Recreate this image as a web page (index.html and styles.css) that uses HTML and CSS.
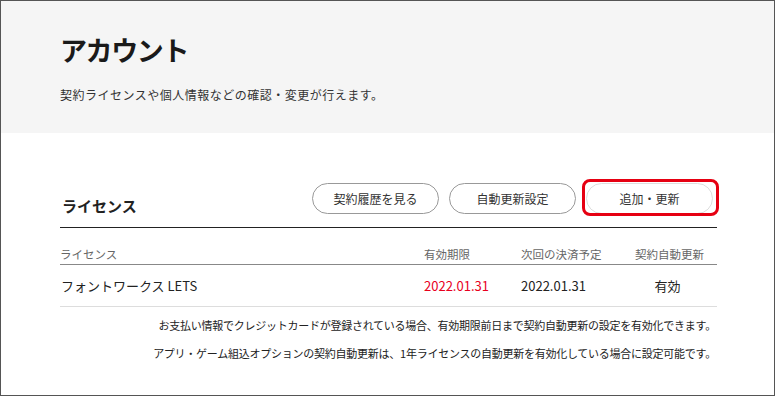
FILE: index.html
```html
<!DOCTYPE html>
<html lang="ja">
<head>
  <meta charset="UTF-8">
  <meta name="viewport" content="width=device-width, initial-scale=1.0">
  <title>アカウント</title>
  <link rel="stylesheet" href="styles.css">
</head>
<body>

  <div class="page">
    <header class="hero">
      <h1>アカウント</h1>
      <p>契約ライセンスや個人情報などの確認・変更が行えます。</p>
    </header>

    <main class="content">
      <div class="section-head">
        <h2>ライセンス</h2>
        <div class="actions">
          <button class="btn">契約履歴を見る</button>
          <button class="btn">自動更新設定</button>
          <button class="btn btn-hl">追加・更新</button>
        </div>
      </div>

      <table class="license-table">
        <thead>
          <tr>
            <th class="col-name">ライセンス</th>
            <th class="col-limit">有効期限</th>
            <th class="col-next">次回の決済予定</th>
            <th class="col-auto">契約自動更新</th>
          </tr>
        </thead>
        <tbody>
          <tr>
            <td>フォントワークス LETS</td>
            <td class="expire">2022.01.31</td>
            <td>2022.01.31</td>
            <td class="center">有効</td>
          </tr>
        </tbody>
      </table>

      <p class="note">お支払い情報でクレジットカードが登録されている場合、有効期限前日まで契約自動更新の設定を有効化できます。</p>
      <p class="note">アプリ・ゲーム組込オプションの契約自動更新は、1年ライセンスの自動更新を有効化している場合に設定可能です。</p>
    </main>
  </div>

</body>
</html>
```

FILE: styles.css
```css
body {
  margin: 0;
  font-family: "Noto Sans CJK JP", "Noto Sans", sans-serif;
  color: #222;
  background: #fff;
}
.page {
  width: 775px;
  height: 396px;
  box-sizing: border-box;
  border: 1px solid #555;
  overflow: hidden;
}
.hero {
  background-color: #f5f5f5;
  padding: 29px 59px 28px;
}
.hero h1 {
  margin: 0;
  font-size: 27px;
  line-height: 40px;
  font-weight: bold;
  letter-spacing: -1.4px;
  color: #1a1a1a;
}
.hero p {
  margin: 15px 0 0;
  font-size: 12px;
  line-height: 20px;
  letter-spacing: 0.5px;
  color: #333;
}
.content {
  padding: 50px 57px 0 59px;
}
.section-head {
  display: flex;
  justify-content: space-between;
  align-items: flex-end;
  padding-bottom: 13px;
  border-bottom: 1px solid #222;
}
.section-head h2 {
  margin: 0 0 -2px 2px;
  font-size: 15px;
  line-height: 20px;
  font-weight: bold;
}
.actions {
  display: flex;
  gap: 10px;
  margin-right: 4px;
}
.btn {
  width: 127px;
  height: 31px;
  padding: 0;
  border: 1px solid #999;
  border-radius: 16px;
  background: #fff;
  font-family: inherit;
  font-size: 12px;
  color: #333;
  cursor: pointer;
}
.btn-hl {
  position: relative;
  border-color: #ddd;
}
/* red highlight frame */
.btn-hl::after {
  content: '';
  position: absolute;
  top: -5px;
  left: -5px;
  right: -7px;
  bottom: -3px;
  border: 3px solid #e60012;
  border-radius: 8px;
}
.license-table {
  width: 100%;
  border-collapse: collapse;
  table-layout: fixed;
}
.license-table th {
  padding: 16px 0 0;
  font-size: 11.5px;
  line-height: 20px;
  font-weight: normal;
  color: #666;
  text-align: left;
  border-bottom: 1px solid #888;
}
.col-name { width: 364px; }
.col-limit { width: 97px; }
.col-next { width: 114px; }
.license-table td {
  padding: 11px 0 10px;
  font-size: 13px;
  line-height: 20px;
  border-bottom: 1px solid #ddd;
}
.license-table td:first-child {
  padding-left: 1px;
}
.expire {
  color: #e8001d;
}
.center {
  text-align: center;
  padding-right: 17px !important;
}
.note {
  margin: 8px 1px 0 0;
  font-size: 11px;
  line-height: 20px;
  letter-spacing: -0.25px;
  text-align: right;
  color: #222;
}
.note + .note {
  margin-top: 8px;
}
```
